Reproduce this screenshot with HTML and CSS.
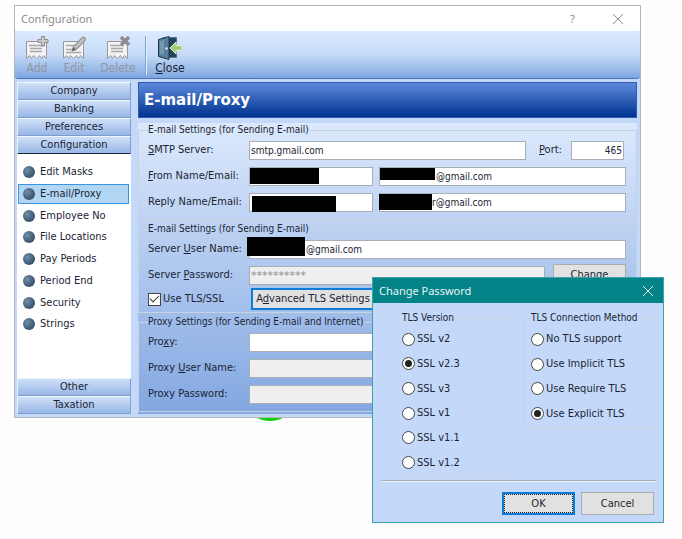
FILE: index.html
```html
<!DOCTYPE html>
<html lang="en">

<head>
  <meta charset="UTF-8" />
  <meta name="viewport" content="width=device-width, initial-scale=1.0" />
  <title>Configuration</title>
  <link rel="stylesheet" href="styles.css">
</head>

<body>
  <div class="green-dot"></div>

  <div class="window">
    <div class="titlebar">
      <span class="title">Configuration</span>
      <button class="title-btn" type="button">?</button>
      <button class="title-btn" type="button" aria-label="Close window">
        <svg width="12" height="12" viewBox="0 0 12 12"><path d="M1 1l10 10M11 1L1 11" stroke="currentColor" fill="none" /></svg>
      </button>
    </div>

    <div class="toolbar">
      <button class="tool" type="button" disabled>
        <svg width="24" height="24" viewBox="0 0 24 24">
          <path d="M1.5 5.500h20v17l-3-3-2 3-2-3-3 3-3-3-2 3-2-3-3 3z" fill="#f3f3f3" stroke="#989898" />
          <path d="M4 9.500h14M5 12.500h12M5 15.500h12" stroke="#a8a8a8" stroke-width="1.500" />
          <path d="M16.500.500h3v3h3.500v3h-3.500v3.500h-3V6.500H13v-3h3.500z" fill="#c9c9c9" stroke="#8c8c8c" />
        </svg>
        <span>Add</span>
      </button>
      <button class="tool" type="button" disabled>
        <svg width="24" height="24" viewBox="0 0 24 24">
          <path d="M1.500 5.500h20v17l-3-3-2 3-2-3-3 3-3-3-2 3-2-3-3 3z" fill="#f3f3f3" stroke="#989898" />
          <path d="M4 9.500h9M4 13.500h6M4 16.500h15" stroke="#a8a8a8" stroke-width="1.500" />
          <path d="M10 15l1.500-4.500L20 1.500q1.500-1 3 .500 1 1 0 2.500l-8.500 9z" fill="#bdbdbd" stroke="#7e7e7e" />
          <path d="M10 15l1.500-4 2.500 2.500z" fill="#666" />
        </svg>
        <span>Edit</span>
      </button>
      <button class="tool" type="button" disabled>
        <svg width="24" height="24" viewBox="0 0 24 24">
          <path d="M1.500 5.500h20v17l-3-3-2 3-2-3-3 3-3-3-2 3-2-3-3 3z" fill="#f3f3f3" stroke="#989898" />
          <path d="M4 9.500h14M5 12.500h12M5 15.500h12" stroke="#a8a8a8" stroke-width="1.500" />
          <path d="M15 1l8 8M23 1l-8 8" stroke="#8c8c8c" stroke-width="3.500" />
        </svg>
        <span>Delete</span>
      </button>
      <span class="separator"></span>
      <button class="tool close" type="button">
        <svg width="24" height="24" viewBox="0 0 24 24">
          <path d="M5 1.500h13.500v20H5z" fill="#26445c" stroke="#52718a" />
          <path d="M.500 3.500L11 .500v23L.500 20.500z" fill="#587f99" stroke="#1d3a50" />
          <path d="M2 5l4-1v15l-4-1z" fill="#7598ae" />
          <circle cx="8.500" cy="12.500" r="1.200" fill="#e3edf3" />
          <path d="M12 12l6-6v3.500h6v5h-6V18z" fill="#a3cc7c" stroke="#e4f2d4" />
        </svg>
        <span><u>C</u>lose</span>
      </button>
    </div>

    <div class="content">
      <div class="sidebar">
        <button class="group-btn" type="button">Company</button>
        <button class="group-btn" type="button">Banking</button>
        <button class="group-btn" type="button">Preferences</button>
        <button class="group-btn open" type="button">Configuration</button>
        <div class="pages">
          <ul>
            <li><a href="#">Edit Masks</a></li>
            <li><a class="active" href="#">E-mail/Proxy</a></li>
            <li><a href="#">Employee No</a></li>
            <li><a href="#">File Locations</a></li>
            <li><a href="#">Pay Periods</a></li>
            <li><a href="#">Period End</a></li>
            <li><a href="#">Security</a></li>
            <li><a href="#">Strings</a></li>
          </ul>
        </div>
        <button class="group-btn" type="button">Other</button>
        <button class="group-btn" type="button">Taxation</button>
      </div>

      <div class="main">
        <h1>E-mail/Proxy</h1>
        <form class="settings">
          <fieldset>
            <legend>E-mail Settings (for Sending E-mail)</legend>
            <div class="row">
              <label class="name" for="smtp"><u>S</u>MTP Server:</label>
              <input class="grow" id="smtp" type="text" value="smtp.gmail.com">
              <label class="port-label" for="port"><u>P</u>ort:</label>
              <input class="port" id="port" type="text" value="465">
            </div>
            <div class="row">
              <label class="name" for="from"><u>F</u>rom Name/Email:</label>
              <div class="field short"><input id="from" type="text"><span class="mask mask-from"></span></div>
              <div class="field grow"><input class="mail" type="text" value="@gmail.com" aria-label="From email"><span class="mask mask-from-mail"></span></div>
            </div>
            <div class="row">
              <label class="name" for="reply">Reply Name/Email:</label>
              <div class="field short"><input id="reply" type="text"><span class="mask mask-reply"></span></div>
              <div class="field grow"><input class="mail reply-mail" type="text" value="r@gmail.com" aria-label="Reply email"><span class="mask mask-reply-mail"></span></div>
            </div>
          </fieldset>

          <fieldset class="server">
            <legend>E-mail Settings (for Sending E-mail)</legend>
            <div class="row">
              <label class="name" for="user">Server <u>U</u>ser Name:</label>
              <div class="field grow"><input class="mail" id="user" type="text" value="@gmail.com"><span class="mask mask-user"></span></div>
            </div>
            <div class="row">
              <label class="name" for="password">Server <u>P</u>assword:</label>
              <input class="grow stars" id="password" type="text" value="**********" disabled>
              <button class="btn change" type="button">Change</button>
            </div>
            <div class="row tls">
              <label class="name"><input type="checkbox" checked>Use TLS/SSL</label>
              <button class="btn focus advanced" type="button">A<u>d</u>vanced TLS Settings</button>
            </div>
          </fieldset>

          <fieldset>
            <legend>Proxy Settings (for Sending E-mail and Internet)</legend>
            <div class="row">
              <label class="name" for="proxy">Pro<u>x</u>y:</label>
              <input class="grow" id="proxy" type="text">
            </div>
            <div class="row">
              <label class="name" for="proxy-user">Proxy <u>U</u>ser Name:</label>
              <input class="grow" id="proxy-user" type="text" disabled>
            </div>
            <div class="row">
              <label class="name" for="proxy-password">Proxy Password:</label>
              <input class="grow" id="proxy-password" type="text" disabled>
            </div>
          </fieldset>
        </form>
      </div>
    </div>
  </div>

  <div class="dialog">
    <div class="titlebar">
      <span class="title">Change Password</span>
      <button class="title-btn" type="button" aria-label="Close dialog">
        <svg width="12" height="12" viewBox="0 0 12 12"><path d="M1 1l10 10M11 1L1 11" stroke="currentColor" fill="none" /></svg>
      </button>
    </div>
    <div class="options">
      <fieldset class="version">
        <legend>TLS Version</legend>
        <label><input type="radio" name="version">SSL v2</label>
        <label><input type="radio" name="version" checked>SSL v2.3</label>
        <label><input type="radio" name="version">SSL v3</label>
        <label><input type="radio" name="version">SSL v1</label>
        <label><input type="radio" name="version">SSL v1.1</label>
        <label><input type="radio" name="version">SSL v1.2</label>
      </fieldset>
      <fieldset class="method">
        <legend>TLS Connection Method</legend>
        <label><input type="radio" name="method">No TLS support</label>
        <label><input type="radio" name="method">Use Implicit TLS</label>
        <label><input type="radio" name="method">Use Require TLS</label>
        <label><input type="radio" name="method" checked>Use Explicit TLS</label>
      </fieldset>
    </div>
    <div class="actions">
      <button class="btn focus" type="button">OK</button>
      <button class="btn" type="button">Cancel</button>
    </div>
  </div>
</body>

</html>
```
FILE: styles.css
```css
* {
  box-sizing: border-box;
  margin: 0;
  padding: 0;
}

body {
  position: relative;
  min-height: 100vh;
  padding: 5px 41px 0 14px;
  background: #fefefe;
  color: #1b2433;
  font: 11px/14px "DejaVu Sans Condensed", "Noto Sans", sans-serif;
}

button,
input {
  font: inherit;
  color: inherit;
}

/* window */
.window {
  position: relative;
  border: 1px solid #b4b6ba;
  background: #c4d9f9;
}

.titlebar {
  display: flex;
  align-items: center;
  height: 25px;
  padding-left: 6px;
  background: #fff;
  color: #8c8c8c;
  font: 11px/16px "Noto Sans", sans-serif;
}

.titlebar .title {
  flex: 1;
}

.title-btn {
  display: flex;
  align-items: center;
  justify-content: center;
  width: 45px;
  border: 0;
  background: none;
}

/* toolbar */
.toolbar {
  display: flex;
  height: 48px;
  padding: 5px 0 0 4px;
  border-bottom: 1px solid #4a74bd;
  border-radius: 3px;
  background: linear-gradient(#dceafd, #c6dbf8 50%, #7fa6e0);
}

.tool {
  display: flex;
  flex-direction: column;
  align-items: center;
  width: 36px;
  margin-right: 1px;
  border: 0;
  background: none;
  font-size: 12px;
  line-height: 16px;
}

.tool:nth-child(3) {
  width: 50px;
}

.tool:disabled {
  color: #9197a0;
}

.separator {
  width: 2px;
  height: 39px;
  margin: 0 5px 0 1px;
  border-left: 1px solid #7d9fd3;
  border-right: 1px solid #eaf2fd;
}

.content {
  display: flex;
  gap: 7px;
  padding: 3px 3px 3px 2px;
}

/* sidebar */
.sidebar {
  display: flex;
  flex-direction: column;
  width: 114px;
  background: #fff;
}

.group-btn {
  height: 18px;
  border: 1px solid #7f9dcb;
  border-top-color: #f0f6ff;
  border-left-color: #e4eefd;
  background: linear-gradient(#cfe0f9, #98b7e6);
  text-align: center;
}

.group-btn.open {
  border-bottom-color: #1d2836;
}

.pages {
  flex: 1;
  padding-top: 8px;
}

.pages ul {
  display: grid;
  grid-auto-rows: 1fr;
  height: 174px;
  list-style: none;
}

.pages a {
  display: flex;
  align-items: center;
  gap: 5px;
  height: 20px;
  margin: 0 2px 0 1px;
  padding-left: 4px;
  border: 1px solid transparent;
  color: inherit;
  text-decoration: none;
}

.pages a::before {
  content: "";
  width: 12px;
  height: 12px;
  border-radius: 50%;
  background: radial-gradient(circle at 35% 35%, #7290a8, #3f5b75 60%, #2b4056);
}

.pages a.active {
  border-color: #3c95e2;
  background: #b1d6f3;
}

/* settings */
.main {
  flex: 1;
}

h1 {
  height: 36px;
  padding-left: 5px;
  border: 1px solid #2f5cb0;
  background: linear-gradient(#5c8adb, #00338f);
  color: #fff;
  font: bold 15px/34px "DejaVu Sans", sans-serif;
}

.settings {
  margin-top: 5px;
  padding-bottom: 2px;
  background: linear-gradient(#dce9fc, #82a7e1);
}

fieldset {
  min-width: 0;
  border: 1px solid #c9d2e0;
}

legend {
  height: 14px;
  font-size: 10px;
  white-space: nowrap;
}

.settings fieldset {
  padding: 0 10px 4px 9px;
}

.settings fieldset + fieldset {
  margin-top: 2px;
}

.settings .server {
  padding-bottom: 2px;
}

.row {
  display: flex;
  align-items: center;
  height: 26px;
}

.row.tls {
  height: 22px;
}

.name {
  width: 101px;
  white-space: nowrap;
}

.tls .name {
  display: flex;
  align-items: center;
  gap: 2px;
  width: 103px;
}

input[type="text"] {
  width: 100%;
  height: 19px;
  padding: 0 1px;
  border: 1px solid #a9aeb6;
  background: #fff;
  font-size: 10px;
}

input[type="text"]:disabled {
  background: #efefef;
  color: #8d8d8d;
}

.row .stars {
  font: 11px "DejaVu Sans", sans-serif;
}

.row input.grow,
.row .grow {
  flex: 1;
  width: 0;
}

.row input.port {
  width: 53px;
  margin-right: 2px;
  text-align: right;
}

.port-label {
  width: 45px;
  padding-left: 13px;
}

.field {
  position: relative;
  height: 19px;
}

.field.short {
  width: 124px;
  margin-right: 6px;
}

.field input.mail {
  padding-left: 56px;
}

.field input.reply-mail {
  padding-left: 52px;
}

/* blacked out names */
.mask {
  position: absolute;
  height: 16px;
  background: #000;
}

.mask-from {
  top: 1px;
  left: 1px;
  width: 69px;
}

.mask-from-mail {
  top: 1px;
  left: 1px;
  width: 55px;
  height: 12px;
}

.mask-reply {
  top: 3px;
  left: 3px;
  width: 84px;
}

.mask-reply-mail {
  top: 1px;
  left: 0;
  width: 53px;
}

.mask-user {
  top: -3px;
  left: -2px;
  width: 58px;
  height: 19px;
}

input[type="checkbox"],
input[type="radio"] {
  display: grid;
  place-items: center;
  appearance: none;
  width: 13px;
  height: 13px;
  border: 1px solid #444;
  background: #fff;
}

input[type="checkbox"]:checked::before {
  content: "";
  width: 8px;
  height: 4px;
  margin-bottom: 3px;
  border: solid #333;
  border-width: 0 0 1px 1px;
  transform: rotate(-45deg);
}

input[type="radio"] {
  border-radius: 50%;
}

input[type="radio"]:checked::before {
  content: "";
  width: 7px;
  height: 7px;
  border-radius: 50%;
  background: #222;
}

.btn {
  width: 73px;
  height: 22px;
  border: 1px solid #adadad;
  background: #e1e1e1;
}

.btn.focus {
  border: 2px solid #0f7bd7;
}

.change {
  margin-left: 8px;
}

.advanced {
  width: 124px;
  white-space: nowrap;
}

/* dialog */
.dialog {
  position: absolute;
  top: 277px;
  right: 18px;
  width: 292px;
  border: 1px solid #3aa3a8;
  background: #c4d9f9;
}

.dialog .titlebar {
  background: #038387;
  color: #e6f4f4;
}

.dialog .title-btn {
  width: 30px;
}

.options {
  display: flex;
  align-items: flex-start;
  gap: 16px;
  padding: 8px 9px 0 21px;
}

.options fieldset {
  display: grid;
  grid-auto-rows: 1fr;
  padding: 2px 7px 2px 7px;
}

.options label {
  display: flex;
  align-items: center;
  gap: 2px;
  white-space: nowrap;
}

.version {
  width: 113px;
  height: 167px;
}

.method {
  flex: 1;
  height: 118px;
}

.actions {
  display: flex;
  justify-content: flex-end;
  gap: 6px;
  margin: 2px 7px 0 8px;
  padding: 11px 2px 7px 0;
  border-top: 1px solid #a5aebb;
  box-shadow: inset 0 1px #eef4fd;
}

.actions .btn {
  height: 23px;
}

.actions .focus {
  outline: 1px dotted #222;
  outline-offset: -3px;
}

.green-dot {
  position: absolute;
  top: 396px;
  left: 250px;
  width: 40px;
  height: 25px;
  border-radius: 50%;
  background: #12d312;
}
```
